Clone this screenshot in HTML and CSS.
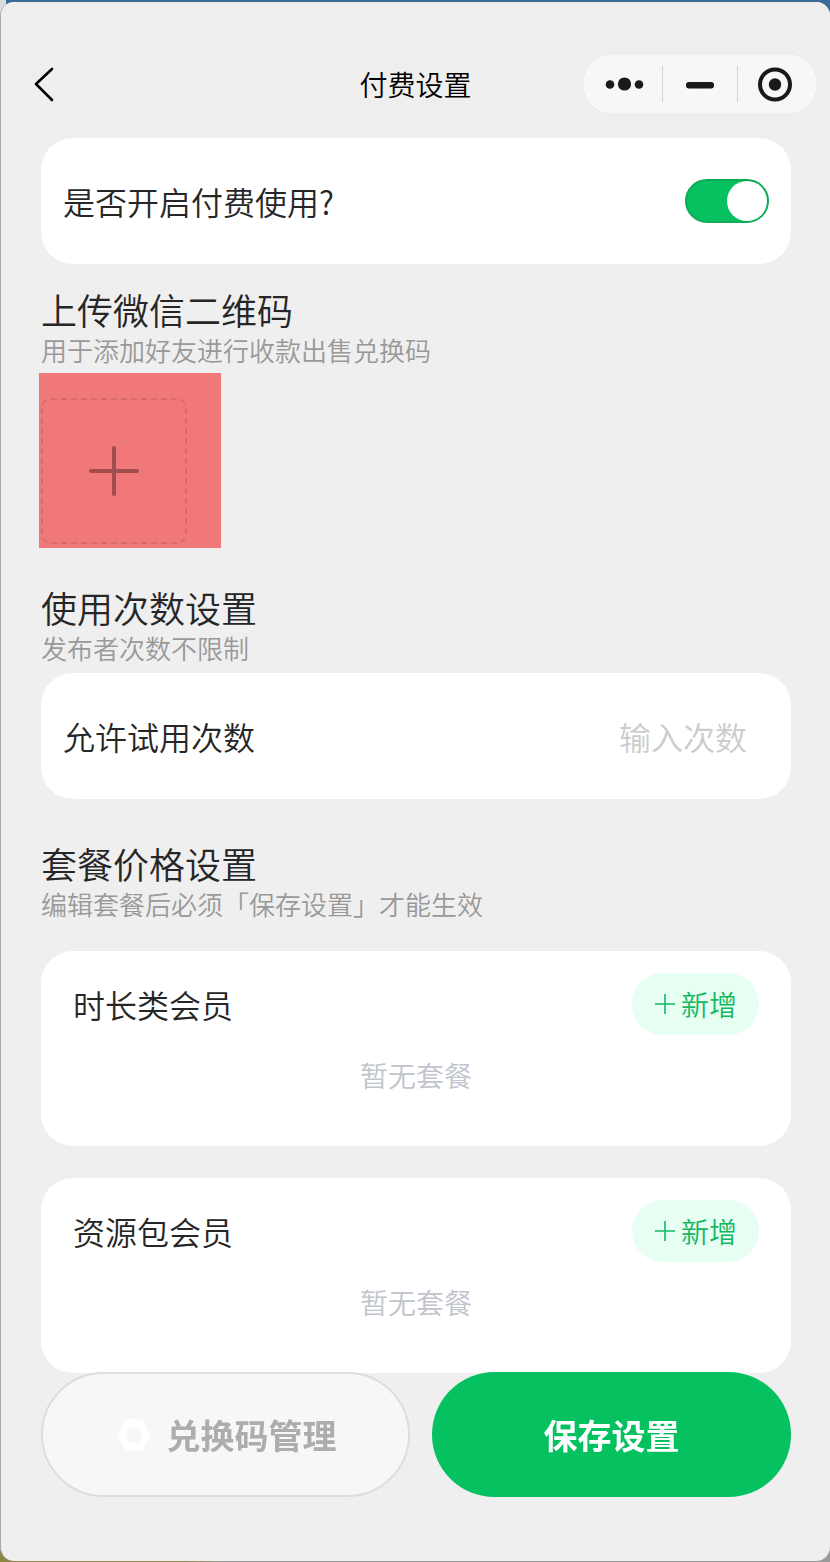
FILE: index.html
```html
<!DOCTYPE html>
<html lang="zh-CN">

<head>
  <meta charset="UTF-8">
  <meta name="viewport" content="width=device-width, initial-scale=1.0">
  <title>付费设置</title>
  <link rel="stylesheet" href="styles.css">
</head>

<body>
  <div class="window">
    <header class="navbar">
      <button class="back" type="button" aria-label="返回">
        <svg width="22" height="36" viewBox="0 0 22 36">
          <path d="M19 3 L3 18 L19 34" fill="none" stroke="#000" stroke-width="2.6" stroke-linecap="round" stroke-linejoin="round" />
        </svg>
      </button>
      <h1>付费设置</h1>
      <div class="capsule">
        <button type="button" aria-label="更多">
          <svg width="40" height="36" viewBox="0 0 40 36">
            <circle cx="6" cy="18.5" r="4.3" />
            <circle cx="20.5" cy="18" r="6.6" />
            <circle cx="35" cy="18.5" r="4.3" />
          </svg>
        </button>
        <button type="button" aria-label="最小化">
          <svg width="40" height="36" viewBox="0 0 40 36">
            <rect x="6" y="16" width="28" height="6.4" rx="3" />
          </svg>
        </button>
        <button type="button" aria-label="关闭">
          <svg width="40" height="36" viewBox="0 0 40 36">
            <circle class="ring" cx="19" cy="18.5" r="15" />
            <circle cx="19" cy="18.5" r="6.2" />
          </svg>
        </button>
      </div>
    </header>

    <main class="content">
      <div class="card row">
        <label for="paid">是否开启付费使用?</label>
        <input id="paid" class="switch" type="checkbox" role="switch" checked>
      </div>

      <section class="qrcode">
        <h2>上传微信二维码</h2>
        <p>用于添加好友进行收款出售兑换码</p>
        <div class="upload">
          <button type="button" aria-label="上传二维码">
            <svg width="50" height="50" viewBox="0 0 50 50">
              <path d="M25 2 V48 M2 25 H48" stroke="#a04d4e" stroke-width="4" stroke-linecap="round" />
            </svg>
          </button>
        </div>
      </section>

      <section class="trial">
        <h2>使用次数设置</h2>
        <p>发布者次数不限制</p>
        <div class="card row">
          <label for="times">允许试用次数</label>
          <input id="times" class="times" type="text" inputmode="numeric" placeholder="输入次数">
        </div>
      </section>

      <section class="prices">
        <h2>套餐价格设置</h2>
        <p>编辑套餐后必须「保存设置」才能生效</p>
        <div class="card package">
          <div class="package-head">
            <h3>时长类会员</h3>
            <button class="add" type="button">
              <svg width="22" height="22" viewBox="0 0 22 22">
                <path d="M11 1 V21 M1 11 H21" />
              </svg>
              新增
            </button>
          </div>
          <div class="empty">暂无套餐</div>
        </div>
        <div class="card package">
          <div class="package-head">
            <h3>资源包会员</h3>
            <button class="add" type="button">
              <svg width="22" height="22" viewBox="0 0 22 22">
                <path d="M11 1 V21 M1 11 H21" />
              </svg>
              新增
            </button>
          </div>
          <div class="empty">暂无套餐</div>
        </div>
      </section>
    </main>

    <footer class="actions">
      <button class="codes" type="button">
        <svg width="38" height="36" viewBox="0 0 38 36">
          <path d="M11 5 Q19 3 27 5 Q29 12 34 18 Q29 24 27 31 Q19 33 11 31 Q9 24 4 18 Q9 12 11 5 Z" fill="#fff" stroke="#fff" stroke-width="4" stroke-linejoin="round" />
          <circle cx="19" cy="18" r="8" fill="#f7f7f7" />
        </svg>
        兑换码管理
      </button>
      <button class="save" type="button">保存设置</button>
    </footer>
  </div>
</body>

</html>
```

FILE: styles.css
```css
* {
  box-sizing: border-box;
  margin: 0;
  padding: 0;
}

body {
  min-height: 100vh;
  padding: 2px 0 1px;
  background: linear-gradient(to right, #8d8644 180px, #999 220px) bottom / 100% 20px no-repeat,
    linear-gradient(to right, #d8dde2 6px, #3a6c99 6px) top / 100% 20px no-repeat #999;
  color: #262626;
  font-family: "Noto Sans CJK SC", "Microsoft YaHei", sans-serif;
  font-weight: 350;
}

button,
input {
  border: none;
  background: none;
  color: inherit;
  font: inherit;
}

button {
  display: flex;
  align-items: center;
  justify-content: center;
  cursor: pointer;
}

h1,
h2,
h3 {
  font-weight: 350;
}

.window {
  min-height: calc(100vh - 3px);
  padding-bottom: 187px;
  border-left: 1px solid #aaa;
  border-radius: 14px;
  background: #efefef;
}

/* navigation bar */
.navbar {
  display: grid;
  grid-template-columns: 1fr auto 1fr;
  align-items: center;
  padding: 51px 12px 13px;
  border-radius: 14px 14px 0 0;
  background: #eee;
}

.navbar h1 {
  color: #000;
  font-size: 28px;
  line-height: 40px;
}

.back {
  justify-self: start;
  margin-left: 20px;
}

.capsule {
  display: flex;
  justify-self: end;
  align-items: center;
  width: 236px;
  height: 62px;
  padding: 0 4px;
  border: 1px solid #e8e8e8;
  border-radius: 31px;
  background: #f7f7f7;
}

.capsule button {
  flex: 1;
}

.capsule button + button {
  border-left: 1px solid #d4d4d4;
}

.capsule svg {
  fill: #191919;
}

.capsule .ring {
  fill: none;
  stroke: #191919;
  stroke-width: 4;
}

/* settings */
.content {
  padding: 10px 39px 0 40px;
}

.card {
  border-radius: 32px;
  background: #fff;
}

.row {
  display: flex;
  align-items: center;
  justify-content: space-between;
  height: 126px;
  padding: 0 22px;
  font-size: 32px;
}

.switch {
  appearance: none;
  display: flex;
  justify-content: flex-end;
  width: 84px;
  height: 44px;
  border: 2px solid #0eaa57;
  border-radius: 22px;
  background: #05c160;
  cursor: pointer;
}

.switch::before {
  content: "";
  width: 40px;
  height: 40px;
  border-radius: 50%;
  background: #fff;
}

.switch:not(:checked) {
  justify-content: flex-start;
  border-color: #dfdfdf;
  background: #dfdfdf;
}

.times {
  flex: 1;
  min-width: 0;
  padding-right: 22px;
  text-align: right;
}

.times::placeholder {
  color: #ccc;
}

section h2 {
  font-size: 36px;
  line-height: 36px;
}

section p {
  color: #999;
  font-size: 26px;
  line-height: 46px;
}

.qrcode {
  padding-top: 27px;
}

.upload {
  width: 182px;
  margin-left: -2px;
  padding: 25px 2px 4px;
  background: #f07878;
}

.upload button {
  width: 146px;
  height: 146px;
  border: 2px dashed #d96a6b;
  border-radius: 10px;
}

.trial {
  padding-top: 41px;
}

.trial .card {
  margin-top: 2px;
}

.prices {
  padding-top: 46px;
}

.package {
  margin-top: 32px;
  padding: 22px 32px 51px;
}

p + .package {
  margin-top: 24px;
}

.package-head {
  display: flex;
  align-items: center;
  justify-content: space-between;
}

.package h3 {
  font-size: 32px;
  line-height: 48px;
}

.add {
  gap: 5px;
  height: 62px;
  padding: 0 22px;
  border-radius: 31px;
  background: #e6fff2;
  color: #14b863;
  font-size: 28px;
}

.add path {
  stroke: #14b863;
  stroke-width: 1.6;
}

.empty {
  margin-top: 20px;
  color: #c0c4cc;
  font-size: 28px;
  line-height: 40px;
  text-align: center;
}

/* bottom buttons, always over the list */
.actions {
  position: fixed;
  right: 0;
  bottom: 65px;
  left: 0;
  display: grid;
  grid-template-columns: 369fr 359fr;
  gap: 22px;
  padding: 0 39px 0 41px;
}

.actions button {
  height: 125px;
  border-radius: 63px;
  font-size: 34px;
  font-weight: 700;
}

.codes {
  gap: 14px;
  border: 2px solid #ddd;
  background: #f7f7f7;
  color: #adadad;
}

.save {
  background: #05c160;
  color: #fff;
}
```
